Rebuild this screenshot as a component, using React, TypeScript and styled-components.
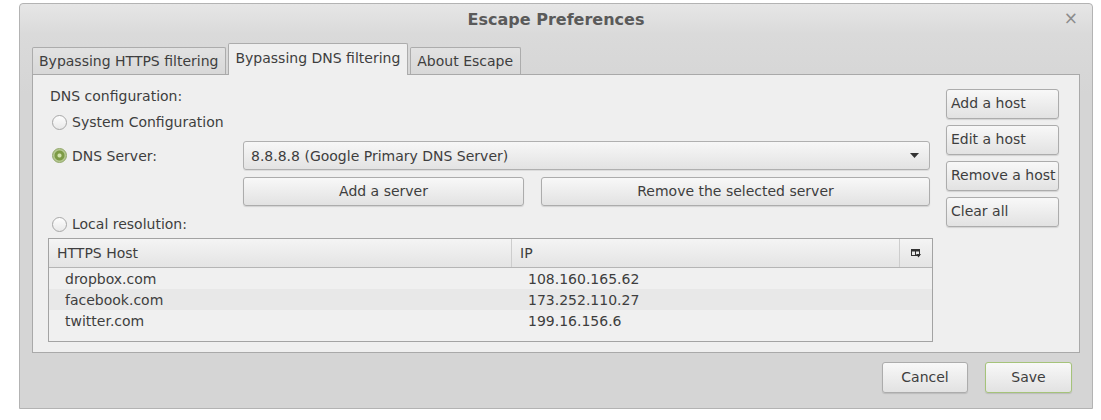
import React from "react";
import styled, { createGlobalStyle, css } from "styled-components";

const Global = createGlobalStyle`
  html, body { margin: 0; padding: 0; background: #ffffff; }
  body {
    font-family: "DejaVu Sans", "Liberation Sans", sans-serif;
    font-size: 14px;
    color: #3e3e3e;
  }
  #root { width: 1101px; height: 420px; padding-top: 3px; box-sizing: border-box; }
`;

const Window = styled.div`
  margin-left: 19px;
  width: 1074px;
  height: 406px;
  box-sizing: border-box;
  border: 1px solid #b3b3b3;
  border-radius: 4px 4px 0 0;
  background: #d5d5d5;
  display: flex;
  flex-direction: column;
`;

const TitleBar = styled.div`
  height: 30px;
  flex: none;
  display: flex;
  align-items: center;
  justify-content: center;
  position: relative;
  background: linear-gradient(#e6e6e6, #dadada);
  border-radius: 4px 4px 0 0;
`;

const Title = styled.div`
  font-weight: bold;
  font-size: 16px;
  color: #5a5a5a;
`;

const Close = styled.div`
  position: absolute;
  right: 14px;
  top: 5px;
  font-size: 17px;
  color: #8c8c8c;
  line-height: 18px;
`;

const Body = styled.div`
  flex: 1;
  display: flex;
  flex-direction: column;
  padding: 10px 12px 0 12px;
  background: linear-gradient(#dadada, #d5d5d5 60px);
`;

const TabStrip = styled.div`
  display: flex;
  align-items: flex-end;
  height: 30px;
  gap: 2px;
  position: relative;
  z-index: 1;
`;

const Tab = styled.div<{ $active?: boolean }>`
  box-sizing: border-box;
  padding: 0 7px 0 6px;
  display: flex;
  align-items: center;
  border: 1px solid #acacac;
  border-bottom: none;
  border-radius: 2px 2px 0 0;
  white-space: nowrap;
  ${(p) =>
    p.$active
      ? css`
          height: 32px;
          margin-bottom: -1px;
          background: #efefef;
          padding-bottom: 4px;
        `
      : css`
          height: 27px;
          background: linear-gradient(#e2e2e2, #d8d8d8);
        `}
`;

const Panel = styled.div`
  height: 279px;
  box-sizing: border-box;
  border: 1px solid #a9a9a9;
  background: #efefef;
  display: flex;
  padding: 13px 20px 0 15px;
  gap: 13px;
`;

const LeftCol = styled.div`
  width: 885px;
  display: flex;
  flex-direction: column;
`;

const RightCol = styled.div`
  width: 113px;
  display: flex;
  flex-direction: column;
  gap: 6px;
  margin-top: 1px;
`;

const SectionLabel = styled.div`
  height: 17px;
  line-height: 17px;
  margin-left: 2px;
`;

const RadioRow = styled.div<{ $mt: number }>`
  display: flex;
  align-items: center;
  margin-top: ${(p) => p.$mt}px;
`;

const RadioLabel = styled.label<{ $w?: number }>`
  display: flex;
  align-items: center;
  gap: 5px;
  height: 20px;
  padding-left: 4px;
  ${(p) => (p.$w ? `width: ${p.$w}px; box-sizing: border-box;` : "")}
`;

const RadioCircle = styled.span<{ $checked?: boolean }>`
  width: 15px;
  height: 15px;
  box-sizing: border-box;
  border-radius: 50%;
  flex: none;
  ${(p) =>
    p.$checked
      ? css`
          border: 1px solid #8fa565;
          background: radial-gradient(circle, #d3e3ae 0 1.5px, #7d9b45 2.5px 4.5px, #b6c993 5.5px);
        `
      : css`
          border: 1px solid #a7a7a7;
          background: linear-gradient(#fdfdfd, #e9e9e9);
        `}
`;

const Combo = styled.div`
  width: 687px;
  height: 29px;
  box-sizing: border-box;
  border: 1px solid #b0b0b0;
  border-radius: 3px;
  background: linear-gradient(#f7f7f7, #e3e3e3);
  box-shadow: 0 1px 0 rgba(0, 0, 0, 0.08);
  display: flex;
  align-items: center;
  justify-content: space-between;
  padding: 0 10px 0 7px;
`;

const ButtonRow = styled.div`
  display: flex;
  gap: 17px;
  margin-left: 195px;
  margin-top: 7px;
`;

const Button = styled.button<{ $w?: number; $h?: number; $left?: boolean; $default?: boolean }>`
  font: inherit;
  color: #3e3e3e;
  width: ${(p) => (p.$w ? `${p.$w}px` : "100%")};
  height: ${(p) => p.$h ?? 29}px;
  flex: none;
  box-sizing: border-box;
  border: 1px solid ${(p) => (p.$default ? "#a5c37a" : "#acacac")};
  border-radius: 3px;
  background: linear-gradient(#f8f8f8, #e2e2e2);
  box-shadow: 0 1px 1px rgba(0, 0, 0, 0.12);
  display: flex;
  align-items: center;
  justify-content: ${(p) => (p.$left ? "flex-start" : "center")};
  padding: 0 ${(p) => (p.$left ? "4px" : "0")};
  padding-bottom: 2px;
  white-space: nowrap;
`;

const Table = styled.div`
  margin-top: 4px;
  width: 885px;
  height: 104px;
  box-sizing: border-box;
  border: 1px solid #a3a3a3;
  background: #f0f0f0;
  display: flex;
  flex-direction: column;
`;

const HeaderRow = styled.div`
  display: grid;
  grid-template-columns: 463px 388px 1fr;
  height: 29px;
  box-sizing: border-box;
  border-bottom: 1px solid #b5b5b5;
  background: linear-gradient(#f4f4f4, #e4e4e4);
`;

const HeaderCell = styled.div<{ $center?: boolean }>`
  display: flex;
  align-items: center;
  justify-content: ${(p) => (p.$center ? "center" : "flex-start")};
  padding-left: ${(p) => (p.$center ? "0" : "8px")};
  border-right: 1px solid #cdcdcd;
  &:last-child { border-right: none; }
`;

const DataRow = styled.div<{ $alt?: boolean }>`
  display: grid;
  grid-template-columns: 463px 1fr;
  height: 21px;
  align-items: center;
  background: ${(p) => (p.$alt ? "#e8e8e8" : "#f0f0f0")};
`;

const DataCell = styled.div`
  padding-left: 16px;
`;

const Footer = styled.div`
  flex: 1;
  display: flex;
  justify-content: flex-end;
  align-items: flex-start;
  gap: 17px;
  padding: 9px 8px 0 0;
`;

const ColumnsIcon = () => (
  <svg width="10" height="10" viewBox="0 0 10 10">
    <rect x="0.5" y="1.5" width="8" height="6" fill="none" stroke="#333" strokeWidth="1" />
    <rect x="0.5" y="1.5" width="8" height="2" fill="#333" />
    <line x1="4.5" y1="3" x2="4.5" y2="8" stroke="#333" />
    <path d="M5 6 L10 6 L7.5 9.5 Z" fill="#333" />
  </svg>
);

const Arrow = () => (
  <svg width="9" height="6" viewBox="0 0 9 6">
    <path d="M0 0 H9 L4.5 5 Z" fill="#333" />
  </svg>
);

const hosts = [
  { host: "dropbox.com", ip: "108.160.165.62" },
  { host: "facebook.com", ip: "173.252.110.27" },
  { host: "twitter.com", ip: "199.16.156.6" },
];

export default function App() {
  return (
    <>
      <Global />
      <Window>
        <TitleBar>
          <Title>Escape Preferences</Title>
          <Close>×</Close>
        </TitleBar>
        <Body>
          <TabStrip>
            <Tab>Bypassing HTTPS filtering</Tab>
            <Tab $active>Bypassing DNS filtering</Tab>
            <Tab>About Escape</Tab>
          </TabStrip>
          <Panel>
            <LeftCol>
              <SectionLabel>DNS configuration:</SectionLabel>
              <RadioRow $mt={7}>
                <RadioLabel>
                  <RadioCircle />
                  System Configuration
                </RadioLabel>
              </RadioRow>
              <RadioRow $mt={9}>
                <RadioLabel $w={195}>
                  <RadioCircle $checked />
                  DNS Server:
                </RadioLabel>
                <Combo>
                  <span>8.8.8.8 (Google Primary DNS Server)</span>
                  <Arrow />
                </Combo>
              </RadioRow>
              <ButtonRow>
                <Button $w={281}>Add a server</Button>
                <Button $w={389}>Remove the selected server</Button>
              </ButtonRow>
              <RadioRow $mt={8}>
                <RadioLabel>
                  <RadioCircle />
                  Local resolution:
                </RadioLabel>
              </RadioRow>
              <Table>
                <HeaderRow>
                  <HeaderCell>HTTPS Host</HeaderCell>
                  <HeaderCell>IP</HeaderCell>
                  <HeaderCell $center>
                    <ColumnsIcon />
                  </HeaderCell>
                </HeaderRow>
                {hosts.map((h, i) => (
                  <DataRow key={h.host} $alt={i === 1}>
                    <DataCell>{h.host}</DataCell>
                    <DataCell>{h.ip}</DataCell>
                  </DataRow>
                ))}
              </Table>
            </LeftCol>
            <RightCol>
              <Button $left $h={30}>Add a host</Button>
              <Button $left $h={30}>Edit a host</Button>
              <Button $left $h={30}>Remove a host</Button>
              <Button $left $h={30}>Clear all</Button>
            </RightCol>
          </Panel>
          <Footer>
            <Button $w={86} $h={31}>Cancel</Button>
            <Button $w={87} $h={31} $default>Save</Button>
          </Footer>
        </Body>
      </Window>
    </>
  );
}
